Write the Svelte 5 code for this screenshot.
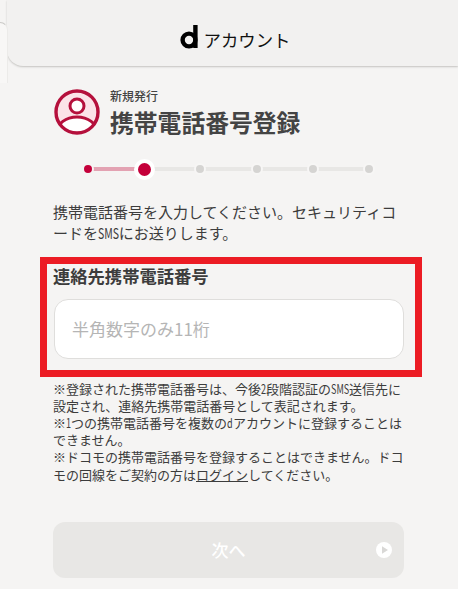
<script>
  const steps = [0, 1, 2, 3, 4, 5];
  const current = 1;
</script>

<div class="page">
  <div class="corner"></div>
  <header class="top">
    <svg class="logo" width="18" height="24" viewBox="0 0 18 24" aria-hidden="true">
      <circle cx="9" cy="15" r="6.4" fill="none" stroke="#000" stroke-width="4.4" />
      <rect x="13.2" y="0" width="4.4" height="23" fill="#000" />
    </svg>
    <span class="brand">アカウント</span>
  </header>

  <main>
    <div class="title-row">
      <svg class="avatar" width="46" height="46" viewBox="0 0 46 46" aria-hidden="true">
        <defs>
          <clipPath id="face"><circle cx="23" cy="23" r="21" /></clipPath>
        </defs>
        <circle cx="23" cy="23" r="21" fill="#fbe3e8" />
        <ellipse cx="23" cy="43" rx="20" ry="15" fill="#fff" stroke="#b5103c" stroke-width="3" clip-path="url(#face)" />
        <circle cx="23" cy="23" r="21" fill="none" stroke="#b5103c" stroke-width="3.4" />
        <circle cx="23" cy="17" r="7" fill="#fff" stroke="#b5103c" stroke-width="3" />
      </svg>
      <div class="titles">
        <p class="sub">新規発行</p>
        <h1>携帯電話番号登録</h1>
      </div>
    </div>

    <ol class="steps">
      {#each steps as s}
        <li class:done={s < current} class:now={s === current}></li>
      {/each}
    </ol>

    <p class="lead">携帯電話番号を入力してください。セキュリティコードを<span class="sms">SMS</span>にお送りします。</p>

    <section class="field">
      <label for="tel">連絡先携帯電話番号</label>
      <input id="tel" type="tel" placeholder="半角数字のみ11桁" />
    </section>

    <p class="note">
      ※登録された携帯電話番号は、今後<span class="ch">2</span>段階認証の<span class="sms">SMS</span>送信先に設定され、連絡先携帯電話番号として表記されます。<br />
      ※<span class="ch">1</span>つの携帯電話番号を複数の<span class="ch">d</span>アカウントに登録することはできません。<br />
      ※ドコモの携帯電話番号を登録することはできません。ドコモの回線をご契約の方は<a href="#login">ログイン</a>してください。
    </p>

    <button class="next" disabled>
      <span>次へ</span>
      <svg class="arrow" width="16" height="16" viewBox="0 0 16 16" aria-hidden="true">
        <circle cx="8" cy="8" r="8" fill="#fff" />
        <path d="M6 4.2 12 8 6 11.8z" fill="#d9d8d6" />
      </svg>
    </button>
  </main>
</div>

<style>
  :global(body) {
    background: #f5f4f3;
  }

  .page {
    position: relative;
    width: 458px;
    height: 589px;
    overflow: hidden;
    background: #f5f4f3;
    font-family: "Noto Sans CJK JP", sans-serif;
    color: #444;
  }

  .corner {
    position: absolute;
    left: -16px;
    top: 22px;
    width: 23px;
    height: 60px;
    border-top: 1px solid #c9c8c6;
    border-right: 1px solid #ecebe9;
    border-top-right-radius: 8px;
    background: #f8f7f6;
  }

  .top {
    display: flex;
    align-items: center;
    justify-content: center;
    gap: 6px;
    height: 66px;
    margin-left: 7px;
    padding: 12px 0 0 5px;
    box-sizing: border-box;
    border-bottom-left-radius: 16px;
    background: #f2f1f0;
    box-shadow: 0 1px 2px #c4c3c0;
  }

  .logo {
    margin-top: -4px;
  }

  .brand {
    font-size: 17.4px;
    line-height: 24px;
    color: #111;
    margin-top: 1px;
  }

  main {
    padding: 23px 54px 0 53px;
  }

  .title-row {
    display: flex;
    gap: 10px;
    height: 46px;
    margin-left: 1px;
  }

  .avatar {
    flex: none;
  }

  .titles {
    margin-top: -1px;
  }

  .sub {
    margin: 0;
    font-size: 12px;
    line-height: 16px;
    font-weight: 500;
  }

  h1 {
    margin: 3px 0 0;
    font-size: 23.8px;
    line-height: 30px;
    font-weight: 700;
  }

  .steps {
    position: relative;
    display: flex;
    justify-content: space-between;
    width: 302px;
    margin: 23.5px 0 0 24.5px;
    padding: 0;
    list-style: none;
  }

  /* track behind the dots, the first stretch is already done */
  .steps::before {
    content: "";
    position: absolute;
    left: 10.5px;
    right: 10.5px;
    top: 8.5px;
    height: 4px;
    background: linear-gradient(90deg, #e3a2b2 56px, #e8e7e5 56px);
  }

  .steps li {
    position: relative;
    display: grid;
    place-items: center;
    width: 21px;
    height: 21px;
  }

  .steps li::before {
    content: "";
    width: 8px;
    height: 8px;
    border: 2px solid #f7f6f5;
    border-radius: 50%;
    background: #d5d4d2;
  }

  .steps li.done::before {
    background: #c4003a;
    border-color: #f5f4f3;
  }

  .steps li.now::before {
    width: 13px;
    height: 13px;
    border: 4px solid #fff;
    background: #c4003a;
  }

  .lead {
    margin: 21px 0 0;
    font-size: 15px;
    line-height: 21px;
    color: #3c3c3c;
  }

  .sms,
  .ch {
    display: inline-block;
    transform: scaleX(0.7);
    transform-origin: left;
  }

  .sms {
    margin-right: -0.63em;
  }

  .ch {
    margin-right: -0.17em;
  }

  .field {
    display: flex;
    flex-direction: column;
    box-sizing: border-box;
    height: 120px;
    margin: 14px -18px 0 -13px;
    padding: 2px 11px 0 6px;
    border: 7px solid #ec1c24;
  }

  label {
    font-size: 17.3px;
    line-height: 20px;
    font-weight: 700;
    color: #3c3c3c;
  }

  input {
    box-sizing: border-box;
    width: 350px;
    height: 60px;
    margin: 13px 0 0 1px;
    padding: 0 17px;
    border: 1px solid #dfdedc;
    border-radius: 14px;
    background: #fff;
    font: 17px "Noto Sans CJK JP", sans-serif;
    outline: none;
  }

  input::placeholder {
    color: #b5b5b5;
    opacity: 1;
  }

  .note {
    margin: 3px 0 0;
    font-size: 13px;
    line-height: 17.2px;
    color: #3c3c3c;
  }

  .note a {
    color: inherit;
  }

  .next {
    display: flex;
    align-items: center;
    justify-content: center;
    position: relative;
    width: 351px;
    height: 56px;
    margin-top: 39px;
    padding: 0;
    border: none;
    border-radius: 12px;
    background: #e8e7e5;
    color: #fff;
    font: 500 17px "Noto Sans CJK JP", sans-serif;
  }

  .arrow {
    position: absolute;
    right: 12px;
    top: 20px;
  }
</style>
